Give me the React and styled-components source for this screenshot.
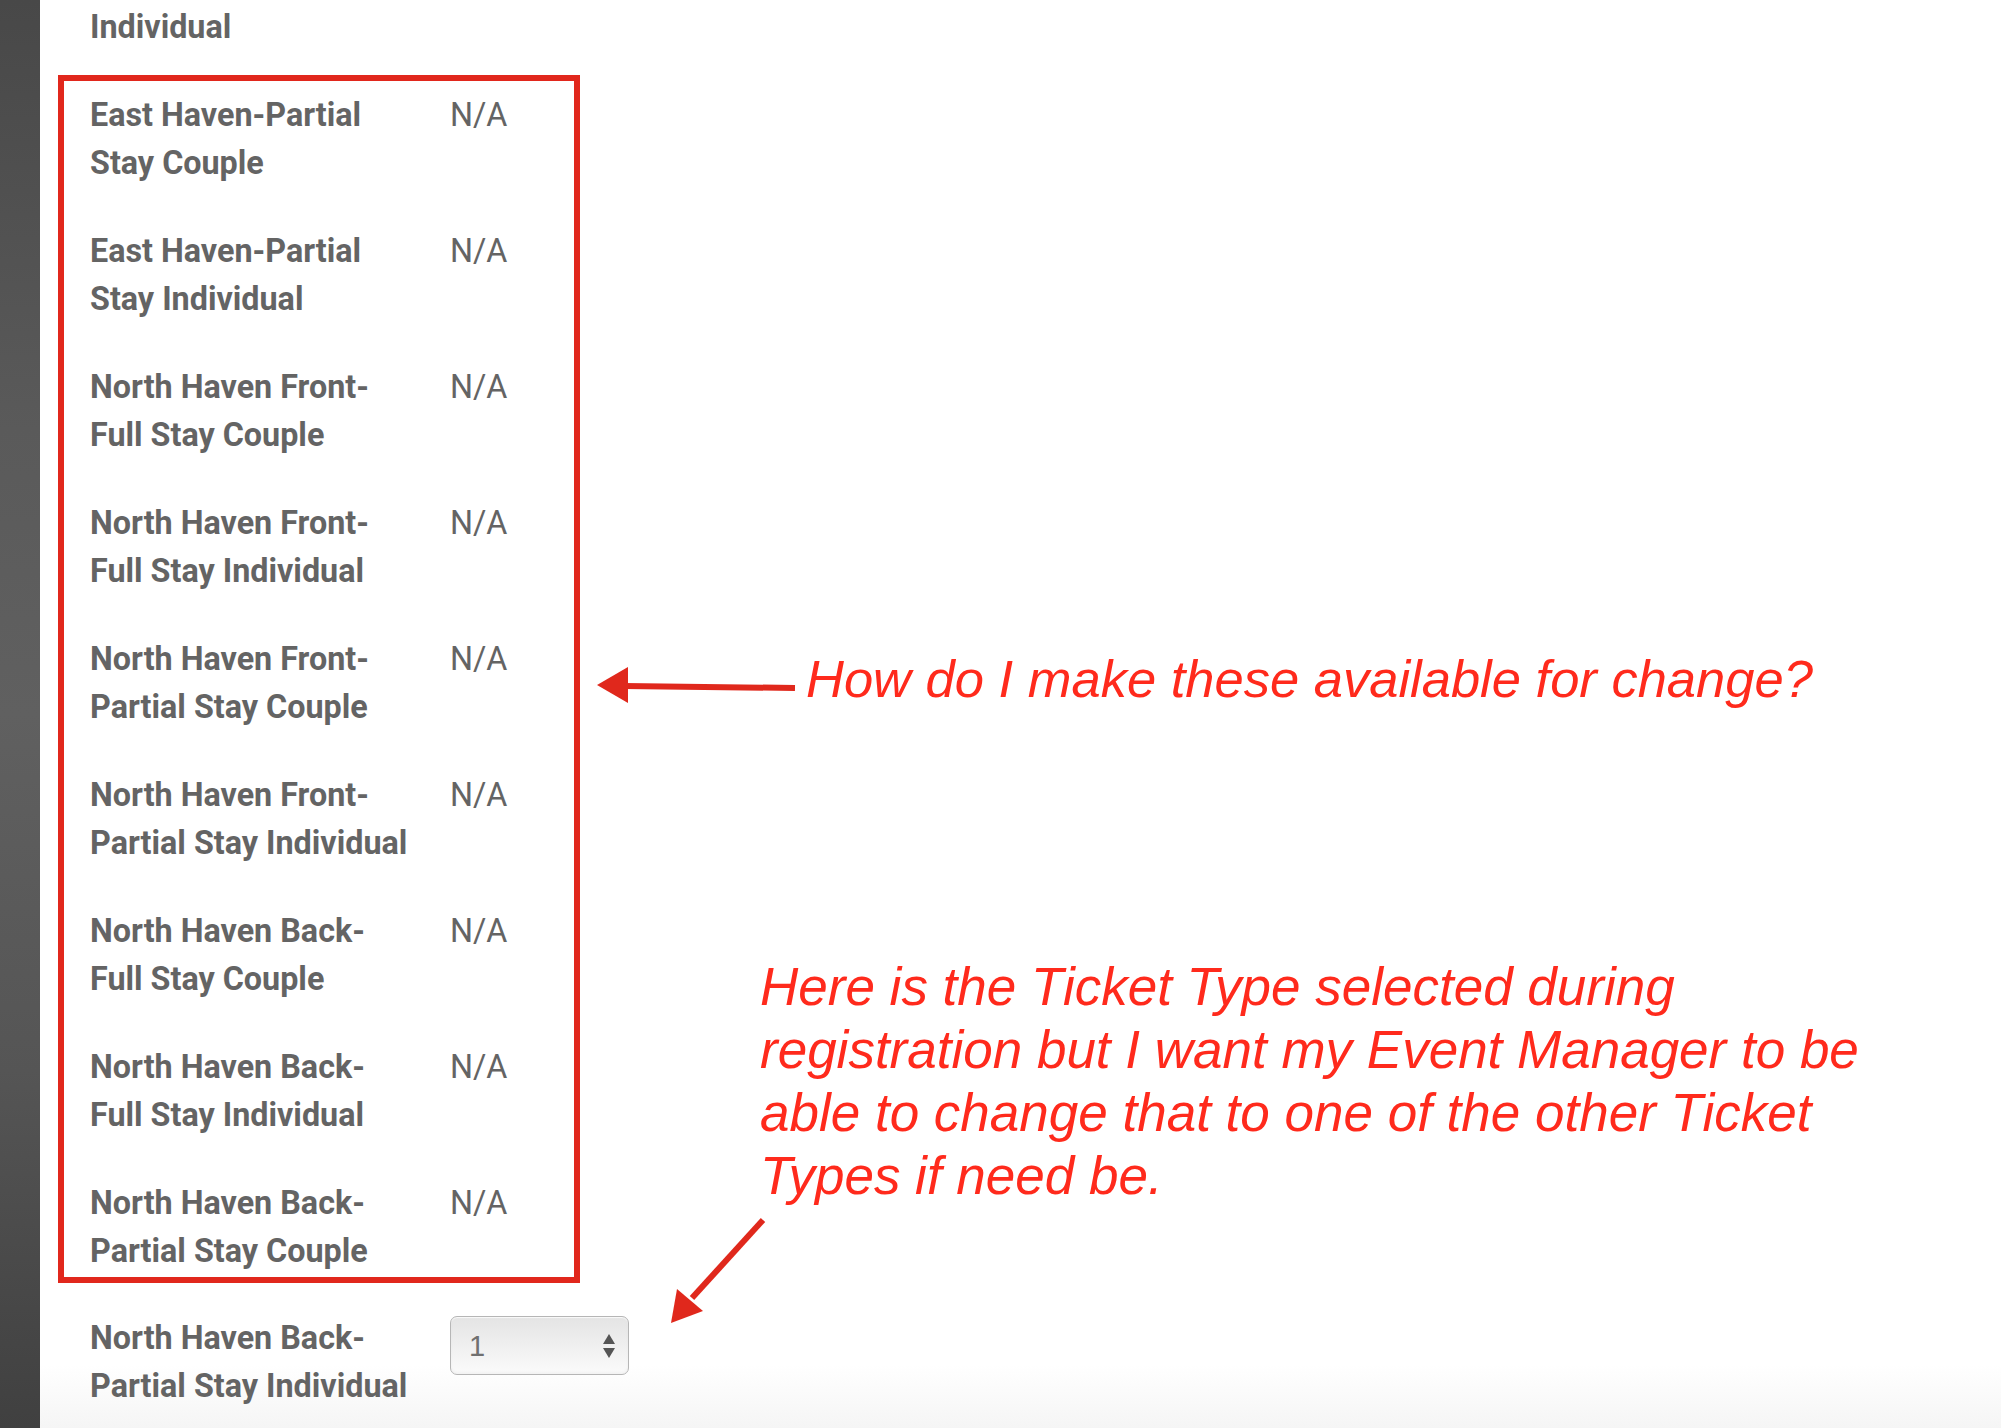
import React from "react";
import styled, { createGlobalStyle } from "styled-components";

const GlobalStyle = createGlobalStyle`
  html, body {
    margin: 0;
    padding: 0;
    background: #ffffff;
    overflow: hidden;
  }
  * { box-sizing: border-box; }
`;

const Page = styled.div`
  position: relative;
  display: flex;
  width: 2001px;
  height: 1428px;
  overflow: hidden;
  font-family: Roboto, "Liberation Sans", sans-serif;
`;

const Sidebar = styled.aside`
  flex: 0 0 40px;
  height: 100%;
  background: linear-gradient(
    to bottom,
    #484848 0%,
    #5a5a5a 30%,
    #606060 50%,
    #555555 75%,
    #404040 100%
  );
`;

const Main = styled.main`
  flex: 1;
  height: 100%;
  padding: 0 0 0 18px;
  display: flex;
  flex-direction: column;
  background: linear-gradient(
    to bottom,
    #ffffff 0px,
    #ffffff 1365px,
    #f5f5f5 1428px
  );
`;

const Section = styled.section`
  width: 522px;
  display: flex;
  flex-direction: column;
  gap: 40px;
  border: 6px solid ${(p) => (p.$highlight ? "#e1271c" : "transparent")};
  padding: ${(p) => p.$pad || "0"};
  margin: ${(p) => p.$margin || "0"};
`;

const Row = styled.div`
  display: grid;
  grid-template-columns: 360px auto;
  padding-left: 26px;
  font-size: 32.3px;
  line-height: 48px;
  color: #646464;
`;

const Label = styled.div`
  font-weight: 700;
`;

const Line = styled.span`
  display: block;
  white-space: nowrap;
`;

const Value = styled.div`
  font-weight: 400;
`;

const SelectBox = styled.div`
  position: relative;
  width: 179px;
  height: 59px;
  margin-top: 2px;
  border: 1.5px solid #b6b6b6;
  border-radius: 7px;
  background: linear-gradient(to bottom, #e4e4e4 0%, #eeeeee 45%, #fbfbfb 100%);
  box-shadow: inset 0 1px 1px rgba(255, 255, 255, 0.8), inset 0 -2px 3px rgba(0, 0, 0, 0.04);
  display: flex;
  align-items: center;
  justify-content: space-between;
  padding: 0 12px 0 18px;
  font-family: "Liberation Sans", Arial, sans-serif;
  font-size: 29px;
  font-weight: 400;
  color: #707070;
`;

const Spinner = styled.svg`
  display: block;
`;

const Note = styled.div`
  position: absolute;
  left: ${(p) => p.$x}px;
  top: ${(p) => p.$y}px;
  font-family: "Liberation Sans", Helvetica, Arial, sans-serif;
  font-style: italic;
  font-size: ${(p) => p.$size}px;
  line-height: 63px;
  color: #ff2a1c;
  white-space: nowrap;
`;

const ArrowSvg = styled.svg`
  position: absolute;
  left: ${(p) => p.$x}px;
  top: ${(p) => p.$y}px;
  overflow: visible;
`;

const highlighted = [
  ["East Haven-Partial", "Stay Couple"],
  ["East Haven-Partial", "Stay Individual"],
  ["North Haven Front-", "Full Stay Couple"],
  ["North Haven Front-", "Full Stay Individual"],
  ["North Haven Front-", "Partial Stay Couple"],
  ["North Haven Front-", "Partial Stay Individual"],
  ["North Haven Back-", "Full Stay Couple"],
  ["North Haven Back-", "Full Stay Individual"],
  ["North Haven Back-", "Partial Stay Couple"],
];

function TicketRow({ lines, children }) {
  return (
    <Row>
      <Label>
        {lines.map((l, i) => (
          <Line key={i}>{l}</Line>
        ))}
      </Label>
      <Value>{children}</Value>
    </Row>
  );
}

export default function App() {
  return (
    <>
      <GlobalStyle />
      <Page>
        <Sidebar />
        <Main>
          <Section $margin="-3px 0 0 0">
            <TicketRow lines={["Individual"]} />
          </Section>
          <Section $highlight $pad="10px 0 2px 0" $margin="18px 0 0 0">
            {highlighted.map((lines, i) => (
              <TicketRow key={i} lines={lines}>
                N/A
              </TicketRow>
            ))}
          </Section>
          <Section $margin="25px 0 0 0">
            <TicketRow lines={["North Haven Back-", "Partial Stay Individual"]}>
              <SelectBox>
                <span>1</span>
                <Spinner width="14" height="28" viewBox="0 0 14 28">
                  <polygon points="7,2 13,12 1,12" fill="#555" />
                  <polygon points="1,16 13,16 7,26" fill="#555" />
                </Spinner>
              </SelectBox>
            </TicketRow>
          </Section>
        </Main>

        <ArrowSvg $x={590} $y={660} width="210" height="50" viewBox="590 660 210 50">
          <line x1="624" y1="686" x2="795" y2="688" stroke="#e0281c" strokeWidth="6" />
          <polygon points="597,685 628,667 628,703" fill="#e0281c" />
        </ArrowSvg>
        <Note $x={806} $y={647} $size={52.5}>
          How do I make these available for change?
        </Note>

        <Note $x={760} $y={955} $size={53}>
          Here is the Ticket Type selected during
          <br />
          registration but I want my Event Manager to be
          <br />
          able to change that to one of the other Ticket
          <br />
          Types if need be.
        </Note>
        <ArrowSvg $x={660} $y={1210} width="110" height="120" viewBox="660 1210 110 120">
          <line x1="763" y1="1220" x2="692" y2="1298" stroke="#e0281c" strokeWidth="6" />
          <polygon points="671,1323 677,1289 703,1311" fill="#e0281c" />
        </ArrowSvg>
      </Page>
    </>
  );
}
